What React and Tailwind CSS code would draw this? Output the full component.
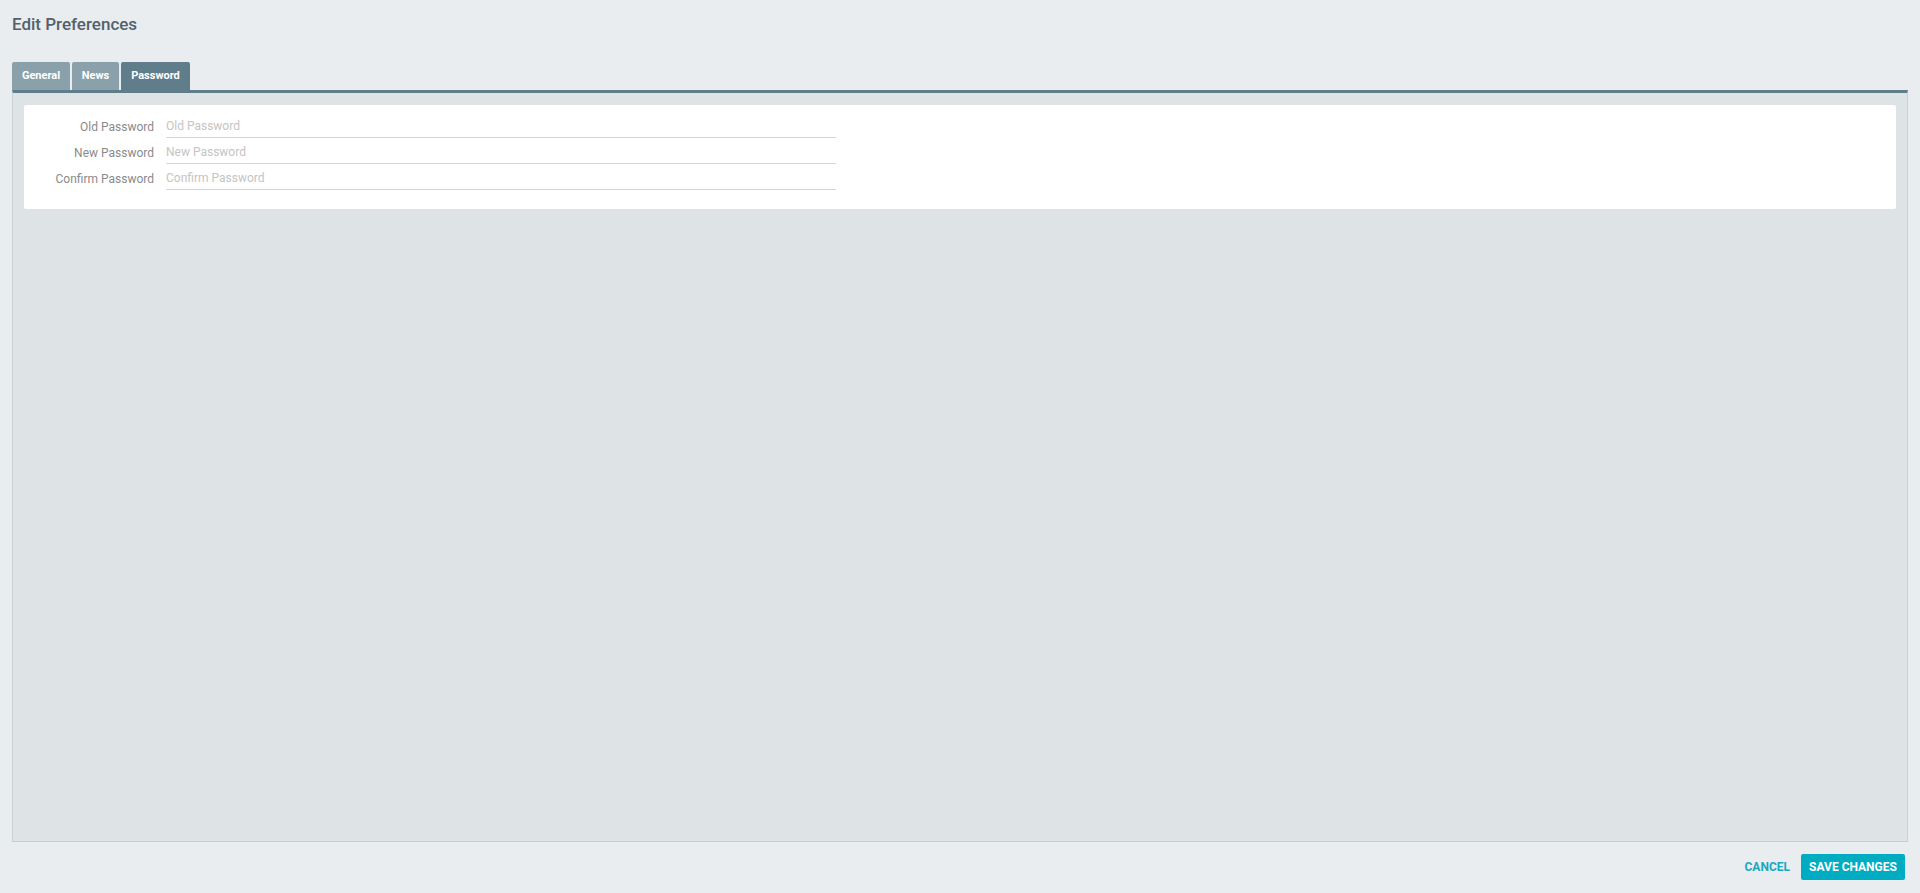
import React from "react";

const fields = [
  { label: "Old Password", placeholder: "Old Password" },
  { label: "New Password", placeholder: "New Password" },
  { label: "Confirm Password", placeholder: "Confirm Password" },
];

export default function App() {
  return (
    <div className="h-[893px] w-full bg-[#e9edf0] flex flex-col px-3 font-['Roboto','Liberation_Sans',sans-serif]">
      <h1 className="pt-[12px] h-[62px] text-[17px] font-medium text-[#54606b]">Edit Preferences</h1>

      <div className="flex gap-[2px] h-[28px]">
        <button className="w-[58px] rounded-t-[2px] bg-[#8aa1ac] text-white text-[11px] font-bold">General</button>
        <button className="w-[47px] rounded-t-[2px] bg-[#8aa1ac] text-white text-[11px] font-bold">News</button>
        <button className="w-[69px] rounded-t-[2px] bg-[#607d8b] text-white text-[11px] font-bold">Password</button>
      </div>

      <div className="h-[752px] border-t-[3px] border-t-[#607d8b] border-x border-b border-[#c8cfd3] bg-[#dee3e6] px-[11px] pt-3">
        <div className="bg-white rounded-[2px] pt-[11px] pb-[19px] flex flex-col gap-[4px]">
          {fields.map((f) => (
            <div key={f.label} className="flex items-end h-[22px]">
              <label className="w-[142px] pr-3 text-right text-[12px] text-[#8a8a8a] pb-[2px]">{f.label}</label>
              <input
                type="password"
                placeholder={f.placeholder}
                className="w-[670px] h-[22px] border-b border-[#d6d6d6] bg-transparent text-[12px] outline-none placeholder:text-[#c4c4c4] pb-[2px]"
              />
            </div>
          ))}
        </div>
      </div>

      <div className="flex justify-end items-center gap-[11px] pt-[12px] pr-[3px]">
        <button className="text-[12px] font-bold text-[#1aa7c0] uppercase">Cancel</button>
        <button className="h-[26px] w-[104px] rounded-[2px] bg-[#00acc1] text-white text-[12px] font-bold uppercase">Save Changes</button>
      </div>
    </div>
  );
}
